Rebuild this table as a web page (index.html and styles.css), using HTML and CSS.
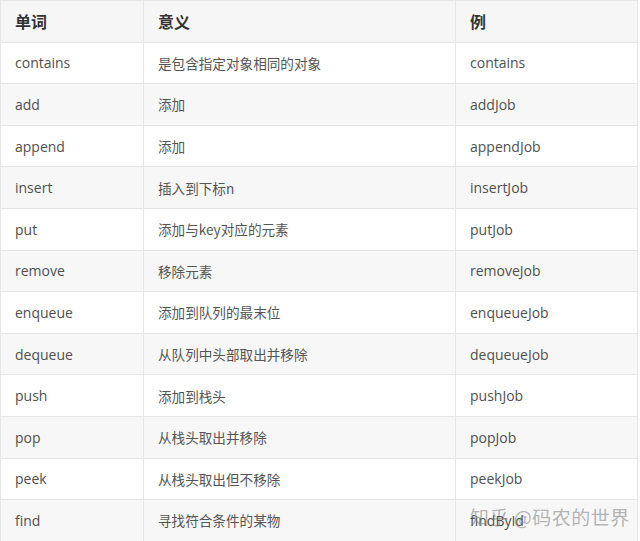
FILE: index.html
```html
<!DOCTYPE html>
<html lang="zh">
<head>
<meta charset="utf-8">
<link rel="stylesheet" href="styles.css">
</head>
<body>
<div class="wrap">
<table class="words">
  <colgroup>
    <col class="c1"><col class="c2"><col class="c3">
  </colgroup>
  <thead>
    <tr><th>单词</th><th>意义</th><th>例</th></tr>
  </thead>
  <tbody>
    <tr><td>contains</td><td>是包含指定对象相同的对象</td><td>contains</td></tr>
    <tr><td>add</td><td>添加</td><td>addJob</td></tr>
    <tr><td>append</td><td>添加</td><td>appendJob</td></tr>
    <tr><td>insert</td><td>插入到下标n</td><td>insertJob</td></tr>
    <tr><td>put</td><td>添加与key对应的元素</td><td>putJob</td></tr>
    <tr><td>remove</td><td>移除元素</td><td>removeJob</td></tr>
    <tr><td>enqueue</td><td>添加到队列的最末位</td><td>enqueueJob</td></tr>
    <tr><td>dequeue</td><td>从队列中头部取出并移除</td><td>dequeueJob</td></tr>
    <tr><td>push</td><td>添加到栈头</td><td>pushJob</td></tr>
    <tr><td>pop</td><td>从栈头取出并移除</td><td>popJob</td></tr>
    <tr><td>peek</td><td>从栈头取出但不移除</td><td>peekJob</td></tr>
    <tr><td>find</td><td>寻找符合条件的某物</td><td>findById</td></tr>
  </tbody>
</table>
<div class="watermark">知乎 @码农的世界</div>
</div>
</body>
</html>
```

FILE: styles.css
```css
html, body {
  margin: 0;
  padding: 0;
  background: #ffffff;
}
.wrap {
  position: relative;
  width: 640px;
  height: 541px;
  overflow: hidden;
}
.words {
  border-collapse: collapse;
  width: 637px;
  table-layout: fixed;
  font-family: "Open Sans", "Noto Sans CJK SC", sans-serif;
  color: #505050;
}
.c1 { width: 143px; }
.c2 { width: 312px; }
.c3 { width: 182px; }
.words tr {
  height: 41.6px;
}
.words th, .words td {
  border: 1px solid #e6e6e6;
  padding: 0 0 0 14px;
  text-align: left;
  vertical-align: middle;
  white-space: nowrap;
  overflow: visible;
}
.words th {
  background: #f6f6f6;
  font-size: 16px;
  font-weight: bold;
  color: #333333;
  font-family: "Noto Sans CJK SC", sans-serif;
}
.words td {
  font-size: 14px;
}
.words td:nth-child(2) {
  font-family: "Noto Sans CJK SC", sans-serif;
  font-size: 13.6px;
  color: #555555;
}
.words tbody tr:nth-child(even) td {
  background: #f7f7f7;
}
.watermark {
  position: absolute;
  left: 470px;
  top: 503px;
  font-family: "Noto Sans CJK SC", sans-serif;
  font-size: 19px;
  color: rgba(120, 120, 120, 0.55);
  letter-spacing: 0.5px;
}
```
